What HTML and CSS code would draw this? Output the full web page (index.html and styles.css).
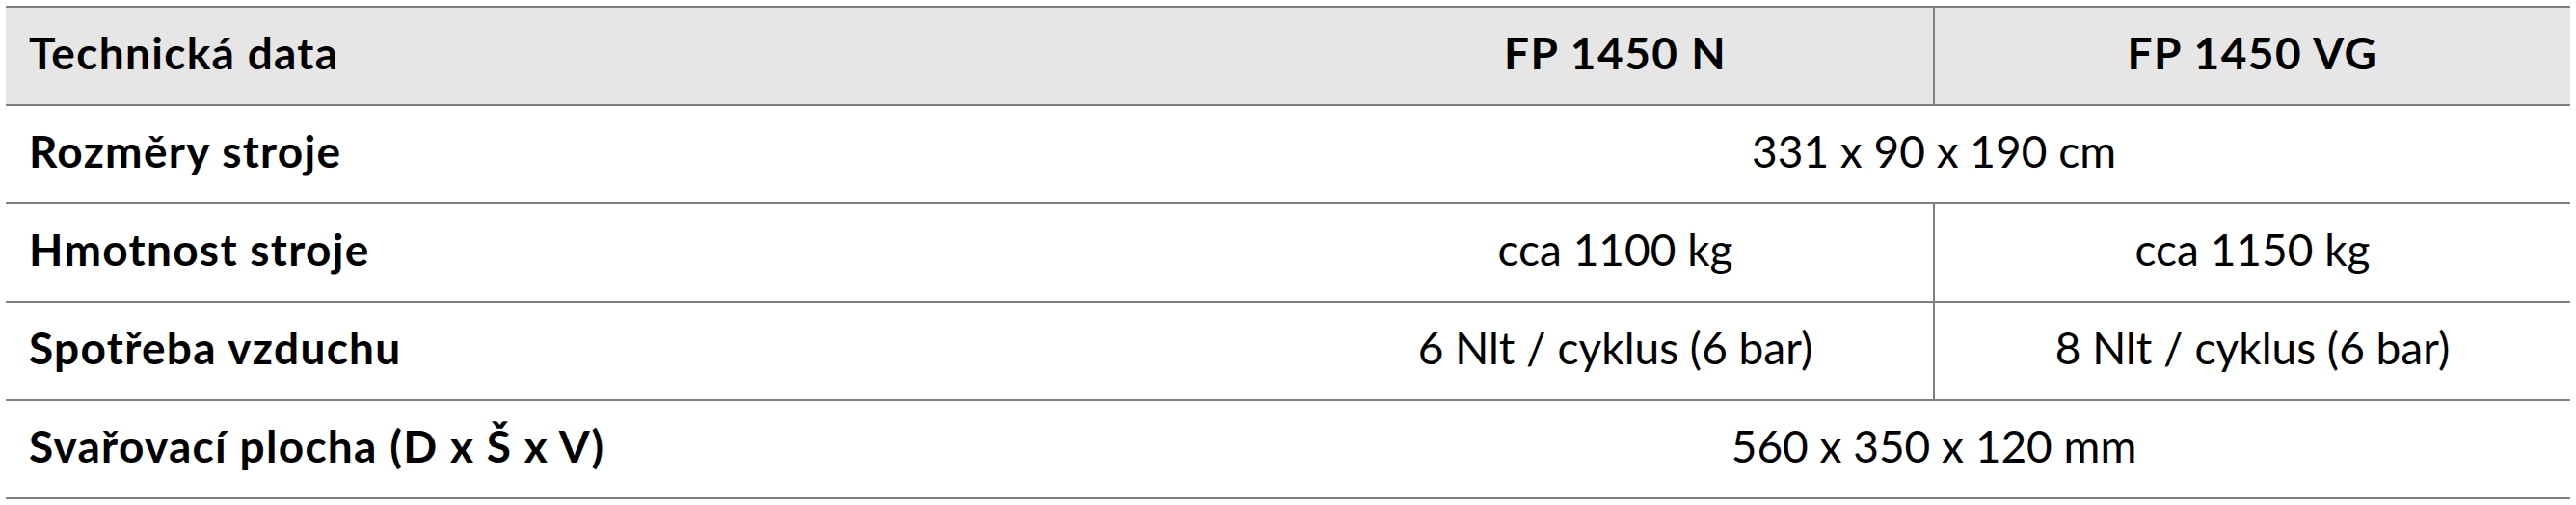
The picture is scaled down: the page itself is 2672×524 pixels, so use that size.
FILE: index.html
```html
<!DOCTYPE html>
<html lang="cs">
<head>
<meta charset="utf-8">
<title>Technická data</title>
<link rel="stylesheet" href="styles.css">
</head>
<body>
<table class="spec">
  <colgroup>
    <col class="col-label">
    <col class="col-model">
    <col class="col-model">
  </colgroup>
  <thead>
    <tr class="head-row">
      <th class="label">Technická data</th>
      <th class="model">FP 1450 N</th>
      <th class="model split">FP 1450 VG</th>
    </tr>
  </thead>
  <tbody>
    <tr>
      <td class="label">Rozměry stroje</td>
      <td class="value" colspan="2">331 x 90 x 190 cm</td>
    </tr>
    <tr>
      <td class="label">Hmotnost stroje</td>
      <td class="value">cca 1100 kg</td>
      <td class="value split">cca 1150 kg</td>
    </tr>
    <tr>
      <td class="label">Spotřeba vzduchu</td>
      <td class="value">6 Nlt / cyklus (6 bar)</td>
      <td class="value split">8 Nlt / cyklus (6 bar)</td>
    </tr>
    <tr>
      <td class="label">Svařovací plocha (D x Š x V)</td>
      <td class="value" colspan="2">560 x 350 x 120 mm</td>
    </tr>
  </tbody>
</table>
</body>
</html>
```

FILE: styles.css
```css
html, body {
  margin: 0;
  padding: 0;
  background: #ffffff;
}

body {
  padding: 6px;
  font-family: "Lato", "Noto Sans", sans-serif;
  color: #000000;
}

.spec {
  width: 2660px;
  border-collapse: collapse;
  table-layout: fixed;
}

.col-label {
  width: 1340px;
}

.col-model {
  width: 660px;
}

.spec th,
.spec td {
  box-sizing: border-box;
  height: 102px;
  padding: 0 0 7px 0;
  border-bottom: 2px solid #808080;
  vertical-align: middle;
  font-size: 46px;
  line-height: 1;
}

.head-row th {
  background: #e6e6e6;
  border-top: 2px solid #808080;
}

.label {
  text-align: left;
  padding-left: 24px !important;
  font-weight: 700;
  letter-spacing: 1.3px;
}

.model {
  text-align: center;
  font-weight: 700;
  letter-spacing: 1.5px;
}

.value {
  text-align: center;
  font-weight: 400;
}

.split {
  border-left: 2px solid #808080;
}
```
